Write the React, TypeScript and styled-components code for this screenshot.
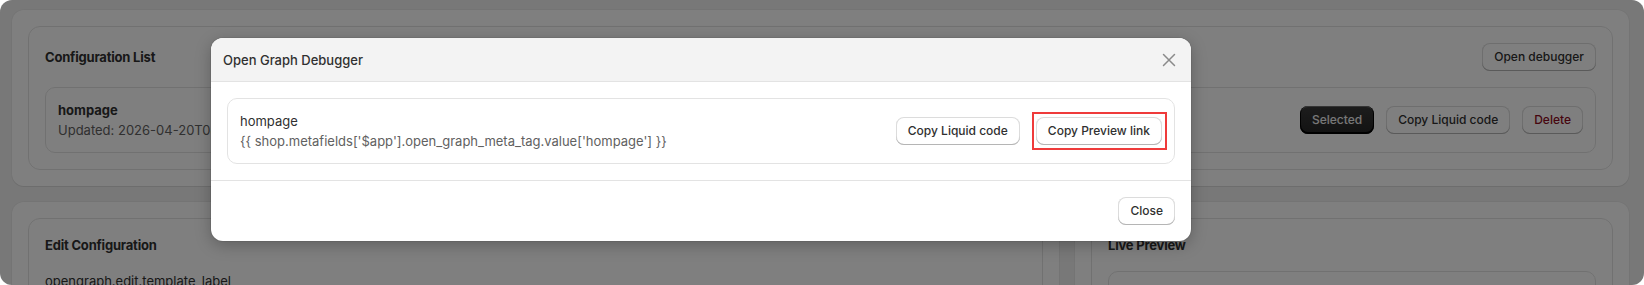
import React from "react";
import styled, { createGlobalStyle, css } from "styled-components";

const GlobalStyle = createGlobalStyle`
  body {
    margin: 0;
    background: #ffffff;
    font-family: Inter, "Noto Sans", "Liberation Sans", sans-serif;
    color: #303030;
    -webkit-font-smoothing: antialiased;
  }
  * { box-sizing: border-box; }
`;

const Frame = styled.div`
  position: relative;
  width: 1644px;
  height: 285px;
  overflow: hidden;
  background: #f1f1f1;
  border-radius: 12px;
  padding: 10px 15px 0 12px;
`;

const Page = styled.div`
  display: flex;
  flex-direction: column;
  gap: 16px;
`;

const OuterCard = styled.div`
  background: #ffffff;
  border-radius: 12px;
  padding: 16px;
  box-shadow: 0 1px 0 0 rgba(26, 26, 26, 0.07), 0 0 0 1px rgba(0, 0, 0, 0.03);
`;

const InnerCard = styled.div<{ $gap?: number }>`
  border: 1px solid #e3e3e3;
  border-radius: 12px;
  padding: 16px;
  display: flex;
  flex-direction: column;
  gap: ${(p) => p.$gap ?? 16}px;
  min-height: 60px;
`;

const HeaderRow = styled.div`
  display: flex;
  align-items: center;
  justify-content: space-between;
  min-height: 28px;
`;

const Title = styled.h2`
  margin: 0;
  font-size: 13px;
  line-height: 20px;
  font-weight: 650;
  letter-spacing: -0.2px;
  color: #303030;
`;

const ItemCard = styled.div`
  border: 1px solid #e3e3e3;
  border-radius: 10px;
  padding: 12px;
  display: flex;
  align-items: center;
  justify-content: space-between;
  gap: 16px;
`;

const ItemText = styled.div`
  display: flex;
  flex-direction: column;
  font-size: 13px;
  line-height: 20px;
`;

const ItemName = styled.span<{ $bold?: boolean }>`
  color: #303030;
  font-weight: ${(p) => (p.$bold ? 650 : 400)};
`;

const ItemMeta = styled.span`
  color: #616161;
`;

const ButtonGroup = styled.div<{ $gap?: number }>`
  display: flex;
  align-items: center;
  gap: ${(p) => p.$gap ?? 12}px;
`;

const Button = styled.button<{ $variant?: "primary" | "secondary"; $tone?: "critical"; $marked?: boolean }>`
  position: relative;
  font-family: inherit;
  font-size: 12px;
  line-height: 16px;
  font-weight: 500;
  height: 28px;
  padding: 6px 12px;
  border: none;
  border-radius: 8px;
  cursor: pointer;
  white-space: nowrap;
  background: #ffffff;
  color: #303030;
  box-shadow: inset 0 -1px 0 0 #b5b5b5, inset 0 0 0 1px #dcdcdc;

  ${(p) =>
    p.$variant === "primary" &&
    css`
      background: linear-gradient(180deg, #3a3a3a 0%, #252525 100%);
      color: #f0f0f0;
      box-shadow: inset 0 -1px 0 1px #000, inset 0 1px 0 0 rgba(255, 255, 255, 0.25);
    `}

  ${(p) =>
    p.$tone === "critical" &&
    css`
      color: #8e0b21;
    `}

  ${(p) =>
    p.$marked &&
    css`
      &::after {
        content: "";
        position: absolute;
        inset: -5px -5px -5px -4px;
        border: 2px solid #ef3b3b;
        pointer-events: none;
      }
    `}
`;

const Row = styled.div`
  display: grid;
  grid-template-columns: 1047px 1fr;
  gap: 16px;
`;

const PlainText = styled.div`
  font-size: 13px;
  line-height: 20px;
  color: #303030;
`;

const PreviewBox = styled.div`
  border: 1px solid #e3e3e3;
  border-radius: 10px;
  height: 120px;
`;

const Backdrop = styled.div`
  position: absolute;
  inset: 0;
  background: rgba(0, 0, 0, 0.5);
`;

const Modal = styled.div`
  position: absolute;
  left: 211px;
  top: 38px;
  width: 980px;
  background: #ffffff;
  border-radius: 12px;
  overflow: hidden;
  box-shadow: 0 4px 16px rgba(0, 0, 0, 0.25), 0 0 0 1px rgba(0, 0, 0, 0.06);
`;

const ModalHeader = styled.div`
  display: flex;
  align-items: center;
  justify-content: space-between;
  height: 44px;
  padding: 0 16px 0 12px;
  background: #f3f3f3;
  border-bottom: 1px solid #e3e3e3;
`;

const ModalTitle = styled.h3`
  margin: 0;
  font-size: 13px;
  line-height: 20px;
  font-weight: 550;
  color: #303030;
`;

const CloseIcon = styled.button`
  display: flex;
  align-items: center;
  justify-content: center;
  width: 20px;
  height: 20px;
  padding: 0;
  margin-right: -4px;
  border: none;
  background: none;
  color: #8a8a8a;
  cursor: pointer;
`;

const ModalBody = styled.div`
  padding: 16px;
  border-bottom: 1px solid #e3e3e3;
`;

const ModalFooter = styled.div`
  display: flex;
  justify-content: flex-end;
  padding: 16px;
`;

export default function App() {
  return (
    <>
      <GlobalStyle />
      <Frame>
        <Page>
          <OuterCard>
            <InnerCard>
              <HeaderRow>
                <Title>Configuration List</Title>
                <Button>Open debugger</Button>
              </HeaderRow>
              <ItemCard>
                <ItemText>
                  <ItemName $bold>hompage</ItemName>
                  <ItemMeta>Updated: 2026-04-20T08:42:17.512Z</ItemMeta>
                </ItemText>
                <ButtonGroup>
                  <Button $variant="primary">Selected</Button>
                  <Button>Copy Liquid code</Button>
                  <Button $tone="critical">Delete</Button>
                </ButtonGroup>
              </ItemCard>
            </InnerCard>
          </OuterCard>
          <Row>
            <OuterCard>
              <InnerCard>
                <Title>Edit Configuration</Title>
                <PlainText>opengraph.edit.template_label</PlainText>
              </InnerCard>
            </OuterCard>
            <OuterCard>
              <InnerCard>
                <Title>Live Preview</Title>
                <PreviewBox />
              </InnerCard>
            </OuterCard>
          </Row>
        </Page>
        <Backdrop />
        <Modal>
          <ModalHeader>
            <ModalTitle>Open Graph Debugger</ModalTitle>
            <CloseIcon aria-label="Close">
              <svg width="20" height="20" viewBox="0 0 20 20" fill="none">
                <path d="M4.5 4.5l11 11M15.5 4.5l-11 11" stroke="currentColor" strokeWidth="1.5" strokeLinecap="round" />
              </svg>
            </CloseIcon>
          </ModalHeader>
          <ModalBody>
            <ItemCard>
              <ItemText>
                <ItemName>hompage</ItemName>
                <ItemMeta>{"{{ shop.metafields['$app'].open_graph_meta_tag.value['hompage'] }}"}</ItemMeta>
              </ItemText>
              <ButtonGroup $gap={16}>
                <Button>Copy Liquid code</Button>
                <Button $marked>Copy Preview link</Button>
              </ButtonGroup>
            </ItemCard>
          </ModalBody>
          <ModalFooter>
            <Button>Close</Button>
          </ModalFooter>
        </Modal>
      </Frame>
    </>
  );
}
